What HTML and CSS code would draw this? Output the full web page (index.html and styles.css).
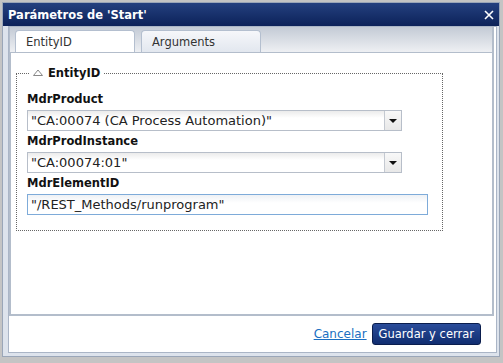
FILE: index.html
```html
<!DOCTYPE html>
<html lang="es">
<head>
  <meta charset="UTF-8">
  <title>Parámetros de 'Start'</title>
  <link rel="stylesheet" href="styles.css">
</head>
<body>
  <div class="dialog">
    <div class="titlebar">
      <span class="title">Parámetros de 'Start'</span>
      <svg class="close" width="10" height="10" viewBox="0 0 10 10">
        <path d="M1 1 L9 9 M9 1 L1 9" stroke="#fff" stroke-width="1.6" fill="none"/>
      </svg>
    </div>
    <div class="frame">
      <div class="window">
        <div class="tabs-area">
          <div class="tabstrip">
            <div class="tab active">EntityID</div>
            <div class="tab">Arguments</div>
          </div>
          <div class="panel">
            <fieldset class="group">
              <legend>
                <svg class="toggle" width="10" height="7" viewBox="0 0 10 7">
                  <path d="M0.5 6.5 L5 1 L9.5 6.5 Z" fill="#fff" stroke="#888" stroke-width="1"/>
                </svg>EntityID
              </legend>
              <div class="field-label">MdrProduct</div>
              <div class="combo">
                <span class="combo-text">"CA:00074 (CA Process Automation)"</span>
                <span class="combo-arrow"><span class="tri"></span></span>
              </div>
              <div class="field-label">MdrProdInstance</div>
              <div class="combo">
                <span class="combo-text">"CA:00074:01"</span>
                <span class="combo-arrow"><span class="tri"></span></span>
              </div>
              <div class="field-label">MdrElementID</div>
              <div class="text-input">"/REST_Methods/runprogram"</div>
            </fieldset>
          </div>
        </div>
        <div class="footer">
          <a class="link" href="#">Cancelar</a>
          <button class="primary">Guardar y cerrar</button>
        </div>
      </div>
    </div>
  </div>
</body>
</html>
```

FILE: styles.css
```css
body {
  margin: 0;
  background-color: #c4c4c4;
  font-family: "DejaVu Sans", Verdana, sans-serif;
  font-size: 12px;
}
.dialog {
  margin: 2px 0 0 2px;
  width: 498px;
  height: 355px;
  box-sizing: border-box;
  border: 1px solid #9aa6b8;
  background-color: #dde3ec;
  display: flex;
  flex-direction: column;
}
.titlebar {
  height: 23px;
  flex-shrink: 0;
  background: linear-gradient(#24407f, #0c2259);
  color: white;
  display: flex;
  align-items: center;
  justify-content: space-between;
  padding: 0 5px 0 5px;
}
.title {
  font-weight: bold;
  font-size: 11.5px;
}
.frame {
  flex: 1;
  display: flex;
  padding: 0 2px 3px 5px;
}
.window {
  flex: 1;
  background: white;
  border: 1px solid #aab5c6;
  display: flex;
  flex-direction: column;
}
.tabs-area {
  flex: 1;
  display: flex;
  flex-direction: column;
  margin-right: 2px;
}
.tabstrip {
  height: 25px;
  flex-shrink: 0;
  box-sizing: border-box;
  background: linear-gradient(#c3cad5, #eef0f3);
  display: flex;
  align-items: flex-end;
  gap: 6px;
  padding-left: 5px;
  border-left: 1px solid #b3bdcb;
  border-right: 2px solid #b3bdcb;
}
.tab {
  width: 120px;
  height: 22px;
  box-sizing: border-box;
  border: 1px solid #b4bfcf;
  border-bottom: none;
  border-radius: 4px 4px 0 0;
  padding-left: 10px;
  line-height: 22px;
  font-size: 11.5px;
  color: #333;
  background: linear-gradient(#f6f7fa, #e2e7ef);
}
.tab.active {
  background: white;
}
.panel {
  flex: 1;
  border: 2px solid #b3bdcb;
  border-top: 1px solid #b3bdcb;
}
.group {
  margin: 12px 0 0 5px;
  width: 427px;
  box-sizing: border-box;
  border: 1px dotted #666;
  padding: 8px 10px 15px 10px;
}
.group legend {
  margin-left: 3px;
  padding: 0 3px;
  line-height: 16px;
  font-weight: bold;
  font-size: 11.5px;
  color: #111;
}
.toggle {
  margin-right: 5px;
  vertical-align: 1px;
}
.field-label {
  font-weight: bold;
  font-size: 11.5px;
  color: #111;
  line-height: 21px;
}
.combo {
  width: 375px;
  height: 21px;
  box-sizing: border-box;
  border: 1px solid #b7bec9;
  background: linear-gradient(#ebebeb, #fff 7px);
  display: flex;
  align-items: center;
}
.combo-text {
  flex: 1;
  padding-left: 3px;
  font-size: 13px;
  color: #222;
}
.combo-arrow {
  width: 16px;
  height: 100%;
  border-left: 1px solid #c4c9d1;
  background: linear-gradient(#f8f8f8, #e8e8e8);
  display: flex;
  align-items: center;
  justify-content: center;
}
.tri {
  width: 0;
  height: 0;
  border-left: 4px solid transparent;
  border-right: 4px solid transparent;
  border-top: 4px solid #111;
}
.text-input {
  width: 401px;
  height: 21px;
  box-sizing: border-box;
  border: 1px solid #7eabd9;
  background: linear-gradient(#eef1f5, #fff 8px);
  padding-left: 3px;
  line-height: 19px;
  font-size: 13px;
  color: #222;
}
.footer {
  height: 36px;
  flex-shrink: 0;
  display: flex;
  align-items: center;
  justify-content: flex-end;
  gap: 5px;
  padding-right: 15px;
}
.link {
  color: #1a6fc2;
  text-decoration: underline;
}
.primary {
  height: 22px;
  padding: 0 6px;
  font-family: inherit;
  font-size: 11.5px;
  color: white;
  border: 1px solid #0a1d4d;
  border-radius: 3px;
  background: linear-gradient(#2a4c9a, #102d70);
}
```
